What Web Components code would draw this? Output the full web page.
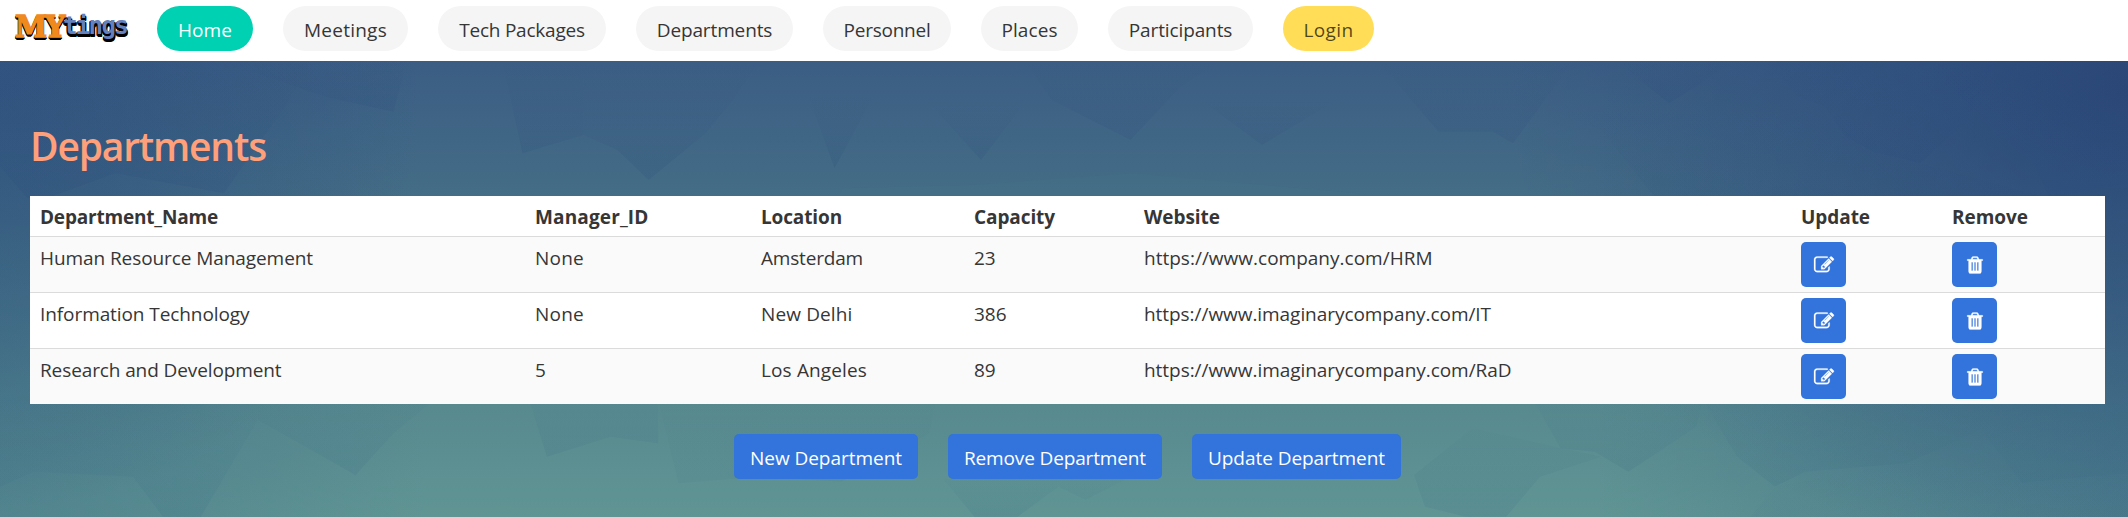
<!DOCTYPE html>
<html lang="en">
<head>
<meta charset="utf-8">
<title>MYtings - Departments</title>
<style>
html,body{margin:0;height:100%}
body{font-family:"Open Sans","Noto Sans",sans-serif;font-size:19px;color:#363636;overflow:hidden}
</style>
</head>
<body>
<departments-page></departments-page>
<script>
function define(name, html, setup) {
  customElements.define(name, class extends HTMLElement {
    connectedCallback() {
      if (this.shadowRoot) return;
      this.attachShadow({ mode: 'open' }).innerHTML = html;
      if (setup) setup(this, this.shadowRoot);
    }
  });
}

/* Text tracked to a given advance width */
define('fit-text', `<style>:host{display:inline-block;white-space:pre}</style><slot></slot>`, el => {
  const w = Number(el.getAttribute('w'));
  el.style.letterSpacing = '0px';
  if (w) el.style.letterSpacing = ((w - el.getBoundingClientRect().width) / el.textContent.length) + 'px';
});

define('brand-logo', `<style>
:host{display:flex;align-items:flex-start;width:127px;height:61px;white-space:pre;box-sizing:border-box;padding-left:15px}
.my{font:900 29px/55px "DejaVu Serif",serif;color:#f08a1d;-webkit-text-stroke:1.4px #f08a1d;text-shadow:-1px 1px #000,-1px 2px #000,0 3px #000,1px 2px #000}
.t{font:bold 24px/53px "DejaVu Sans Mono",monospace;color:#6480bd;text-shadow:-1px 1px #000,-1px 2px #000,0 3px #000,1px 2px #000,1px 3px #000}
</style><span class="my"><fit-text w="48">MY</fit-text></span><span class="t"><fit-text w="64">tings</fit-text></span>`);

define('nav-pill', `<style>
:host{display:flex;justify-content:center;box-sizing:border-box;height:45px;border-radius:22.5px;background:#f5f5f5;line-height:49px}
:host([kind=primary]){background:#00d1b2;color:#fff}
:host([kind=warning]){background:#ffdd57;color:rgba(0,0,0,.7)}
</style><slot></slot>`, el => { el.style.width = el.getAttribute('width') + 'px'; });

define('nav-bar', `<style>
:host{display:flex;height:61px;background:#fff;align-items:center;gap:30px}
nav{display:flex;gap:30px;padding-bottom:4px}
</style><brand-logo></brand-logo><nav></nav>`, (el, root) => {
  root.querySelector('nav').innerHTML = [
    ['Home', 96, 54, 'primary'], ['Meetings', 125, 83], ['Tech Packages', 168, 125.5], ['Departments', 157, 115.5],
    ['Personnel', 128, 87], ['Places', 97, 56], ['Participants', 145, 103.5], ['Login', 91, 50, 'warning']
  ].map(([t, w, tw, k = '']) => `<nav-pill width="${w}" kind="${k}"><fit-text w="${tw}">${t}</fit-text></nav-pill>`).join('');
});

define('action-button', `<style>
:host{display:flex;justify-content:center;height:45px;border-radius:5px;background:#3273dc;color:#fff;line-height:48px}
</style><slot></slot>`, el => { el.style.width = el.getAttribute('width') + 'px'; });

const ICONS = {
  edit: 'M888 1184l116-116-152-152-116 116v56h96v96h56zm440-720q-16-16-33 1l-350 350q-17 17-1 33t33-1l350-350q17-17 1-33zm80 594v190q0 119-84.5 203.5t-203.5 84.5h-832q-119 0-203.5-84.5t-84.5-203.5v-832q0-119 84.5-203.5t203.5-84.5h832q63 0 117 25 15 7 18 23 3 17-9 29l-49 49q-14 14-32 8-23-6-45-6h-832q-66 0-113 47t-47 113v832q0 66 47 113t113 47h832q66 0 113-47t47-113v-126q0-13 9-22l64-64q15-15 35-7t20 29zm-96-738l288 288-672 672h-288v-288zm444 132l-92 92-288-288 92-92q28-28 68-28t68 28l152 152q28 28 28 68t-28 68z',
  trash: 'M704 1376v-704q0-14-9-23t-23-9h-64q-14 0-23 9t-9 23v704q0 14 9 23t23 9h64q14 0 23-9t9-23zm256 0v-704q0-14-9-23t-23-9h-64q-14 0-23 9t-9 23v704q0 14 9 23t23 9h64q14 0 23-9t9-23zm256 0v-704q0-14-9-23t-23-9h-64q-14 0-23 9t-9 23v704q0 14 9 23t23 9h64q14 0 23-9t9-23zm-544-992h448l-48-117q-7-9-17-11h-317q-10 2-17 11zm928 32v64q0 14-9 23t-23 9h-96v948q0 83-47 143.5t-113 60.5h-832q-66 0-113-58.5t-47-141.5v-952h-96q-14 0-23-9t-9-23v-64q0-14 9-23t23-9h309l70-167q15-37 54-63t79-26h320q40 0 79 26t54 63l70 167h309q14 0 23 9t9 23z'
};
define('fa-icon', `<style>:host{display:block;width:20px;height:20px;align-self:center}svg{display:block}</style>
<svg width="20" height="20" viewBox="0 0 1792 1792" fill="#fff" stroke="#fff" stroke-width="24" overflow="visible"><path/></svg>`, (el, root) => {
  root.querySelector('path').setAttribute('d', ICONS[el.getAttribute('name')]);
});

define('table-row', `<style>
:host{display:grid;grid-template-columns:495px 226px 213px 170px 657px 151px 163px;box-sizing:border-box;height:56px;background:#fff;border-top:1px solid #dbdbdb;padding-top:5px;line-height:32px}
:host([shade]){background:#fafafa}
:host([head]){height:40px;border:0;padding-top:4px;line-height:34px;font-weight:700}
::slotted(*){margin-left:10px;justify-self:start;align-self:start}
</style><slot></slot>`);

define('data-table', `<style>:host{display:block;width:2075px}</style><div></div>`, (el, root) => {
  const cells = a => a.map(([t, w]) => `<fit-text w="${w}">${t}</fit-text>`).join('');
  const head = [['Department_Name', 178], ['Manager_ID', 113.5], ['Location', 81], ['Capacity', 81], ['Website', 76], ['Update', 69], ['Remove', 76]];
  const rows = [
    [['Human Resource Management', 273], ['None', 49], ['Amsterdam', 102], ['23', 21.5], ['https://www.company.com/HRM', 288.5]],
    [['Information Technology', 209.5], ['None', 49], ['New Delhi', 91.5], ['386', 32.5], ['https://www.imaginarycompany.com/IT', 347]],
    [['Research and Development', 241.5], ['5', 11], ['Los Angeles', 106], ['89', 21.5], ['https://www.imaginarycompany.com/RaD', 367.5]]
  ];
  const btn = n => `<action-button width="45"><fa-icon name="${n}"></fa-icon></action-button>`;
  root.querySelector('div').innerHTML = `<table-row head>${cells(head)}</table-row>` +
    rows.map((r, i) => `<table-row ${i % 2 ? '' : 'shade'}>${cells(r)}${btn('edit')}${btn('trash')}</table-row>`).join('');
});

/* Low-poly backdrop */
define('poly-backdrop', `<style>:host{display:block;position:absolute;inset:0;z-index:-1}svg{display:block}</style>
<svg width="2128" height="456" viewBox="0 61 2128 456">
<defs>
<linearGradient id="v" gradientUnits="userSpaceOnUse" x1="0" y1="61" x2="0" y2="517"><stop offset="0" stop-color="#3b5d84"/><stop offset=".3" stop-color="#446d86"/><stop offset=".75" stop-color="#57898f"/><stop offset="1" stop-color="#609594"/></linearGradient>
<radialGradient id="l" gradientUnits="userSpaceOnUse" cx="0" cy="0" r="1" gradientTransform="translate(0 90) scale(420 420)"><stop offset="0" stop-color="#26427a" stop-opacity=".45"/><stop offset="1" stop-color="#26427a" stop-opacity="0"/></radialGradient>
<radialGradient id="r" gradientUnits="userSpaceOnUse" cx="0" cy="0" r="1" gradientTransform="translate(2128 90) scale(620 480)"><stop offset="0" stop-color="#263f74" stop-opacity=".75"/><stop offset="1" stop-color="#2c4a7c" stop-opacity="0"/></radialGradient>
<linearGradient id="e"><stop offset="0" stop-color="#356583" stop-opacity=".35"/><stop offset=".2" stop-color="#356583" stop-opacity="0"/><stop offset=".75" stop-color="#2f5a80" stop-opacity="0"/><stop offset="1" stop-color="#2f5a80" stop-opacity=".42"/></linearGradient>
<linearGradient id="s" x1="0" y1="0" x2="0" y2="1"><stop offset="0" stop-color="#2a4a7c" stop-opacity="0"/><stop offset="1" stop-color="#2a4a7c" stop-opacity=".18"/></linearGradient>
<linearGradient id="b" x1="0" y1="0" x2="0" y2="1"><stop offset="0" stop-color="#3a6c86" stop-opacity=".04"/><stop offset="1" stop-color="#3a6c86" stop-opacity=".17"/></linearGradient>
</defs>
<path fill="url(#v)" d="M0 61h2128v456H0z"/><path fill="url(#e)" d="M0 61h2128v456H0z"/><path fill="url(#l)" d="M0 61h2128v456H0z"/><path fill="url(#r)" d="M0 61h2128v456H0z"/>
<g transform="translate(0 60) scale(1.357 .3333)" fill="url(#s)">
<path d="M160 0H300L290 155 240 110z"/><path d="M755 0H900L870 80 833 240 775 120z"/><path d="M430 0H560L540 120 520 220 478 360 455 270 430 225z"/><path d="M370 0H430V225L385 280z"/>
<path d="M595 100H645L615 325z"/><path d="M685 130H755L723 300z"/><path d="M885 120H985L930 255z"/><path d="M1015 0H1160L1115 250 1100 215H1060z"/>
<path d="M1190 0H1280L1230 130z"/><path d="M1300 0H1470L1450 180 1415 310 1380 275 1360 230 1345 140 1325 110z"/><path d="M1415 0H1568V370L1510 414 1500 320z"/>
<path d="M0 0H230L210 140 165 400 85 340 35 414H20L0 320z"/><path d="M1140 150L1180 210 1220 414H1510L1415 310 1345 140 1230 130z" opacity=".5"/>
<path d="M620 385L720 374 835 340 1000 400V414H620z" fill="#427588" opacity=".25"/>
</g>
<g transform="translate(0 400) scale(1.357 .3333)" fill="url(#b)">
<path d="M190 0H320L290 100 262 225 190 60z"/><path d="M0 0H190V60L148 350H120L98 230 25 215 0 260z"/><path d="M390 0H485V130L450 110 403 170z"/>
<path d="M485 0H690L685 100 620 245 560 230 500 250z" opacity=".5"/><path d="M695 237H830L800 300 780 260 750 350H718z"/>
<path d="M1130 0H1255L1250 80 1200 215 1175 155 1150 145z"/><path d="M1255 0H1500L1460 90 1405 190 1330 215 1308 260 1280 170z"/>
<path d="M1460 90L1500 12H1568V220L1490 248z"/><path d="M1085 85L1180 170 1135 230 1110 350H1080L1050 320 1042 225z"/><path d="M1308 260L1405 190 1568 230V350H1290z" opacity=".3"/>
</g>
</svg>`);

define('departments-page', `<style>
:host{display:flex;flex-direction:column;width:2128px;height:517px}
main{flex:1;position:relative;z-index:0;box-sizing:border-box;padding:60px 23px 0 30px;display:flex;flex-direction:column}
h1{margin:0 0 30px;height:45px;line-height:50px;font-size:39px;font-weight:600;color:#ffa07a}
footer{display:flex;gap:30px;margin:30px 0 0 704px}
</style><nav-bar></nav-bar><main><poly-backdrop></poly-backdrop><h1><fit-text w="236">Departments</fit-text></h1><data-table></data-table>
<footer><action-button width="184"><fit-text w="152">New Department</fit-text></action-button><action-button width="214"><fit-text w="182">Remove Department</fit-text></action-button><action-button width="209"><fit-text w="177">Update Department</fit-text></action-button></footer></main>`);
</script>
</body>
</html>
